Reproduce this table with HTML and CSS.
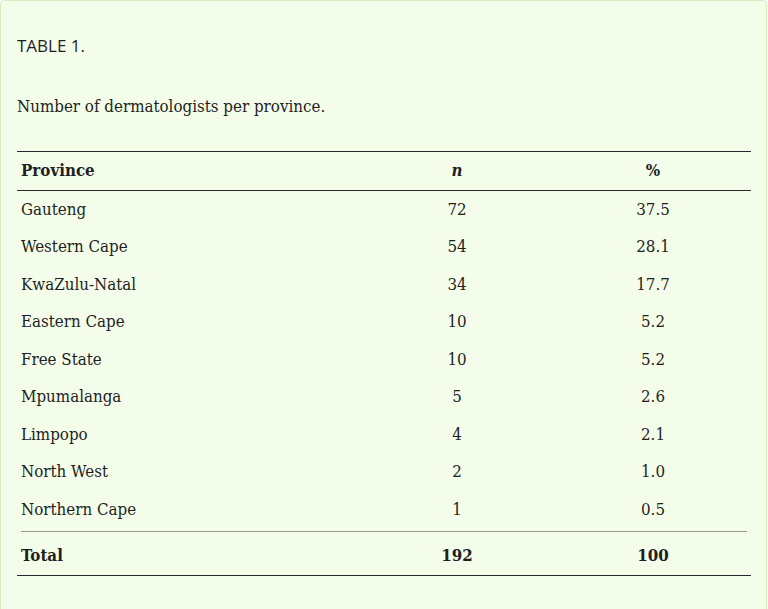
FILE: index.html
```html
<!DOCTYPE html>
<html lang="en">
<head>
<meta charset="utf-8">
<title>Table 1</title>
<link rel="stylesheet" href="styles.css">
</head>
<body>
<div class="box">
  <div class="label">TABLE 1.</div>
  <p class="caption">Number of dermatologists per province.</p>
  <table class="data">
    <colgroup>
      <col class="c1"><col class="c2"><col class="c3">
    </colgroup>
    <thead>
      <tr><th class="left">Province</th><th><i>n</i></th><th>%</th></tr>
    </thead>
    <tbody>
      <tr><td class="left">Gauteng</td><td>72</td><td>37.5</td></tr>
      <tr><td class="left">Western Cape</td><td>54</td><td>28.1</td></tr>
      <tr><td class="left">KwaZulu-Natal</td><td>34</td><td>17.7</td></tr>
      <tr><td class="left">Eastern Cape</td><td>10</td><td>5.2</td></tr>
      <tr><td class="left">Free State</td><td>10</td><td>5.2</td></tr>
      <tr><td class="left">Mpumalanga</td><td>5</td><td>2.6</td></tr>
      <tr><td class="left">Limpopo</td><td>4</td><td>2.1</td></tr>
      <tr><td class="left">North West</td><td>2</td><td>1.0</td></tr>
      <tr><td class="left">Northern Cape</td><td>1</td><td>0.5</td></tr>
      <tr class="sep"><td colspan="3"><div class="sepline"></div></td></tr>
    </tbody>
    <tfoot>
      <tr><th class="left">Total</th><th>192</th><th>100</th></tr>
    </tfoot>
  </table>
</div>
</body>
</html>
```
FILE: styles.css
```css
html, body {
  margin: 0;
  padding: 0;
  background: #ffffff;
}
body {
  color: #1f1f1f;
  font-family: "DejaVu Serif", "Liberation Serif", serif;
  font-stretch: condensed;
}
.box {
  margin: 0 1px 0 0;
  min-height: 700px;
  background: #f3fdea;
  border: 1px solid #d8ecc4;
  border-radius: 4px;
  padding: 29px 16px 0 16px;
}
.label {
  font-family: "Open Sans", "Noto Sans", sans-serif;
  font-stretch: normal;
  font-size: 17px;
  line-height: 32px;
  color: #1f1f1f;
}
.caption {
  margin: 33px 0 0 0;
  font-size: 16.8px;
  line-height: 22px;
}
.data {
  margin-top: 34px;
  width: 734px;
  border-collapse: collapse;
  font-size: 16.8px;
  table-layout: fixed;
}
.c1 { width: 342px; }
.c2 { width: 196px; }
.c3 { width: 196px; }
.data th, .data td {
  padding: 7px 4px;
  line-height: 23.5px;
  text-align: center;
  font-weight: normal;
}
.data th { font-weight: bold; }
.data .left { text-align: left; }
.data thead th {
  border-top: 1px solid #2a2a2a;
  border-bottom: 1px solid #2a2a2a;
}
.data tr.sep td {
  padding: 3px 4px 5px 4px;
  line-height: 0;
}
.sepline {
  height: 0;
  border-top: 1px solid #9a9a9a;
}
.data tfoot th {
  border-bottom: 1px solid #2a2a2a;
}
```
